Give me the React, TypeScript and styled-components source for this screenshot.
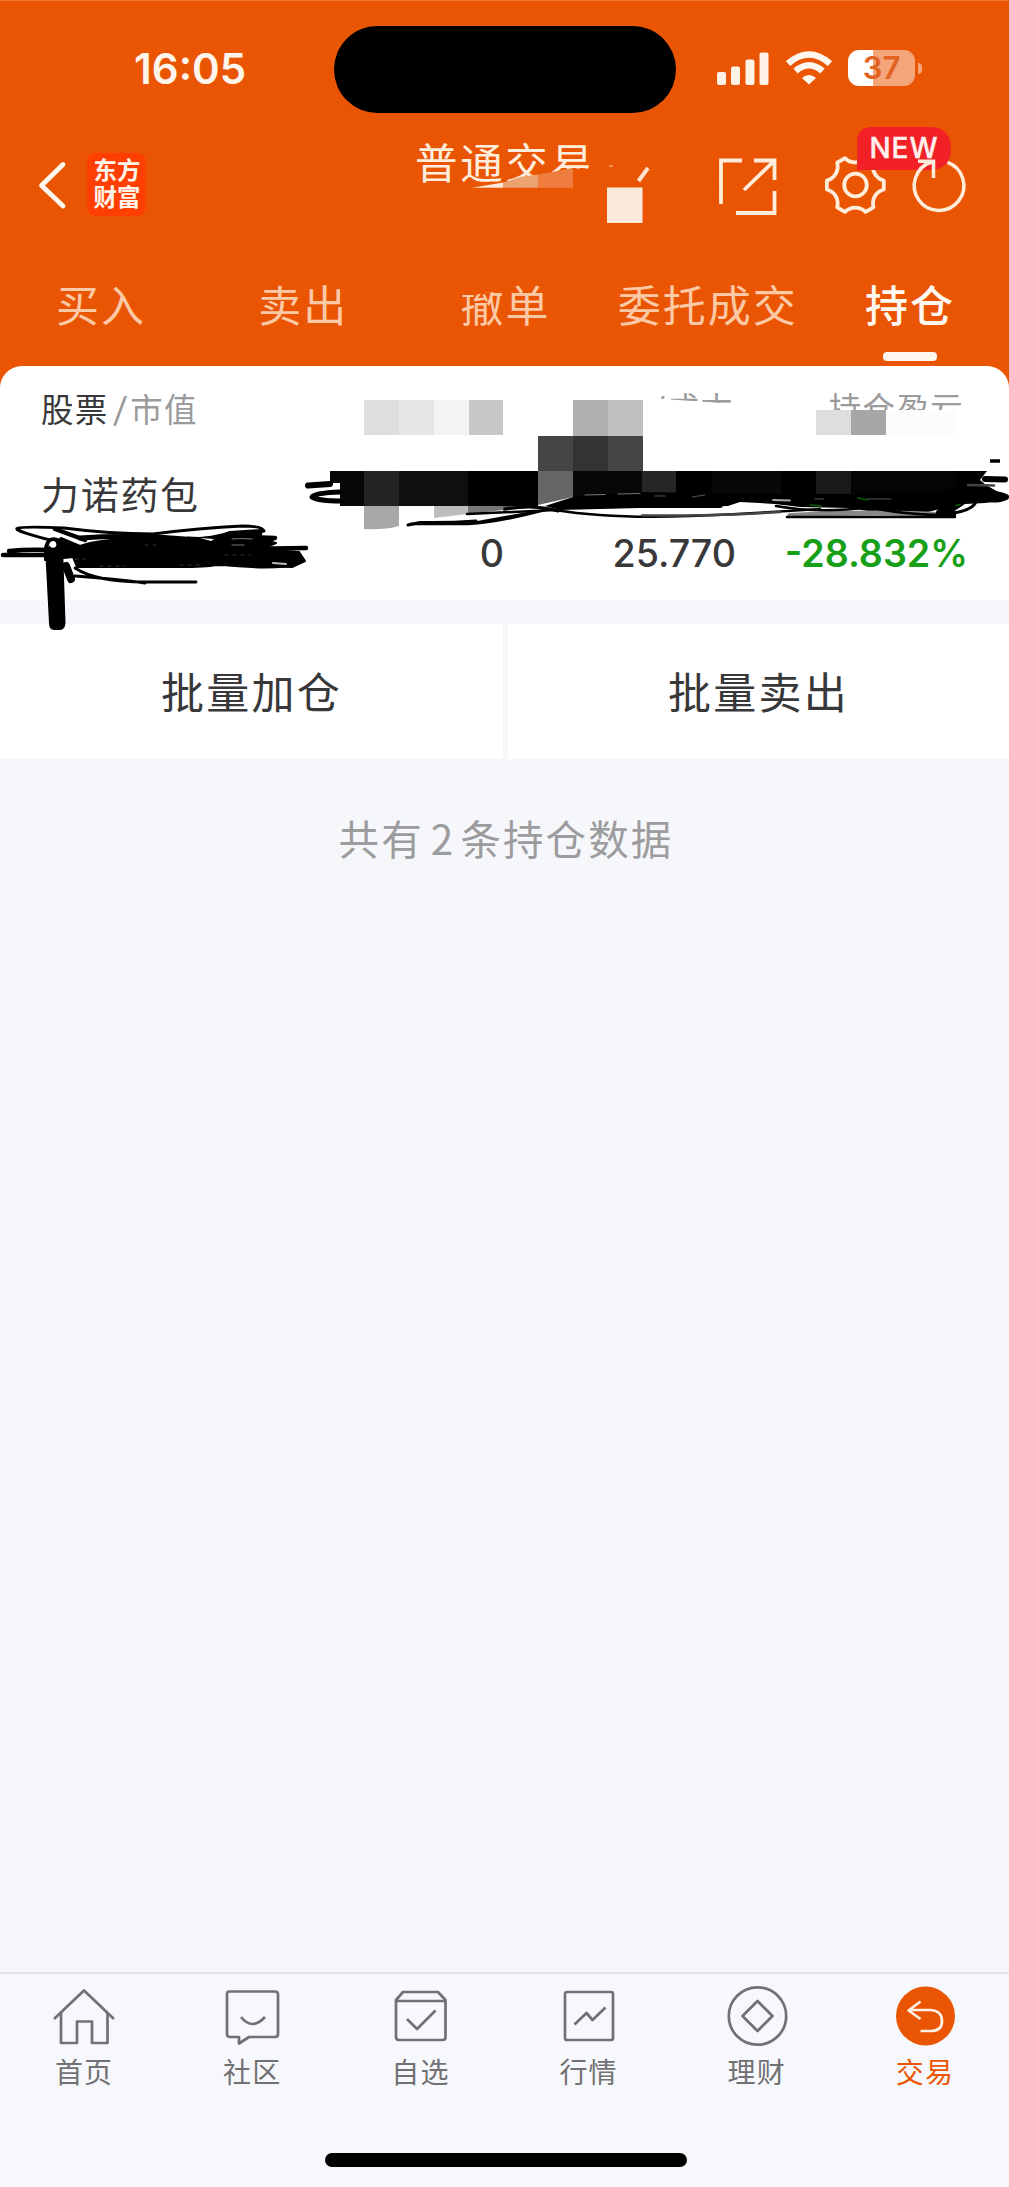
import React from "react";
import styled, { createGlobalStyle } from "styled-components";

const ORANGE = "#ea5503";
const GRAY = "#717174";

const Global = createGlobalStyle`
  * { box-sizing: border-box; }
  body {
    margin: 0;
    background: #f6f7fa;
    font-family: Inter, "Noto Sans CJK SC", sans-serif;
    color: #38383a;
  }
  svg { display: block; flex: none; }
`;

const Screen = styled.div`
  position: relative;
  width: 1009px;
  height: 2187px;
  display: flex;
  flex-direction: column;
  overflow: hidden;
  background: #f6f7fa;
`;

const Header = styled.header`
  height: 392px;
  margin-bottom: -26px;
  flex: none;
  background: ${ORANGE};
  border-top: 1px solid #f0752f;
`;

const StatusBar = styled.div`
  height: 130px;
  display: flex;
  align-items: flex-start;
  padding: 25px 86px 0 134px;
`;

const Clock = styled.div`
  width: 200px;
  padding-top: 17px;
  font-size: 42px;
  line-height: 52px;
  font-weight: 600;
  color: #fff5ec;
`;

const Island = styled.div`
  width: 342px;
  height: 87px;
  border-radius: 44px;
  background: #000;
`;

const StatusIcons = styled.div`
  display: flex;
  align-items: center;
  margin: 24px 0 0 41px;
`;

const WifiIcon = styled.svg`
  margin-left: 17px;
`;

const Battery = styled.div`
  width: 67px;
  height: 36px;
  margin-left: 16px;
  border-radius: 11px;
  display: flex;
  align-items: center;
  justify-content: center;
  background: linear-gradient(90deg, #fff 25px, #f5a57a 25px);
  color: #e2631f;
  font-size: 31px;
  line-height: 36px;
  font-weight: 600;
`;

const Nub = styled.div`
  width: 4px;
  height: 11px;
  margin-left: 3px;
  border-radius: 0 5px 5px 0;
  background: #f5a57a;
`;

const NavBar = styled.nav`
  height: 120px;
  display: flex;
  align-items: flex-start;
  padding-left: 36px;
`;

const BackIcon = styled.svg`
  margin-top: 28px;
`;

const Logo = styled.div`
  width: 61px;
  height: 63px;
  margin: 22px 0 0 19px;
  padding: 4px 0 0 1px;
  border-radius: 9px;
  background: #ff3f02;
  color: #fff4ea;
  font-size: 23.5px;
  line-height: 27px;
  font-weight: 700;
  text-align: center;
`;

const Title = styled.h1`
  width: 288px;
  margin: 3px 0 0 269px;
  font-size: 42.5px;
  line-height: 60px;
  font-weight: 400;
  letter-spacing: 2.6px;
  color: #ffeedd;
`;

const NavIcons = styled.svg`
  margin-left: 15px;
  margin-top: -11px;
`;

const Tabs = styled.div`
  display: grid;
  grid-template-columns: repeat(5, 1fr);
  padding-left: 0;
  margin-right: -2px;
`;

const Tab = styled.div<{ $active?: boolean }>`
  display: flex;
  flex-direction: column;
  align-items: center;
  padding-top: 23px;
  font-size: 43px;
  line-height: 64px;
  letter-spacing: 2px;
  white-space: nowrap;
  font-weight: ${(p) => (p.$active ? 500 : 400)};
  color: ${(p) => (p.$active ? "#fff8f0" : "#fcc9a6")};
  &::after {
    content: "";
    width: 54px;
    height: 9px;
    margin-top: 14px;
    border-radius: 4px;
    background: ${(p) => (p.$active ? "#fff6ee" : "transparent")};
  }
`;

const Card = styled.section`
  height: 234px;
  flex: none;
  border-radius: 22px 22px 0 0;
  background: #fff;
`;

const Row = styled.div<{ $top: number; $size: number }>`
  display: grid;
  grid-template-columns: 301px 162px 232px 230px;
  padding: ${(p) => p.$top}px 0 0 41px;
  font-size: ${(p) => p.$size}px;
  line-height: 56px;
  font-weight: 400;
`;

const HeadCell = styled.span<{ $right?: boolean; $clip?: string }>`
  font-size: 32.5px;
  letter-spacing: 1.3px;
  padding-right: ${(p) => (p.$right ? 2 : 0)}px;
  text-align: ${(p) => (p.$right ? "right" : "left")};
  color: ${(p) => (p.$right ? "#9b9b9d" : "#38383a")};
  clip-path: ${(p) => p.$clip || "none"};
  em { font-style: normal; color: #9b9b9d; }
  i { display: inline-block; font-style: normal; font-size: 34px; padding: 0 3px 0 5px; transform: skewX(-6deg); }
`;

const StockName = styled.div`
  padding: 28px 0 0 41px;
  font-size: 38px;
  line-height: 56px;
  letter-spacing: 1.7px;
`;

const Value = styled.span<{ $down?: boolean }>`
  text-align: right;
  font-weight: ${(p) => (p.$down ? 600 : 500)};
  margin-right: ${(p) => (p.$down ? -2 : 0)}px;
  color: ${(p) => (p.$down ? "#17a017" : "#38383a")};
`;

const Actions = styled.div`
  height: 135px;
  flex: none;
  margin-top: 24px;
  display: grid;
  grid-template-columns: 503px 501px;
  gap: 5px;
`;

const Action = styled.div`
  display: flex;
  align-items: center;
  justify-content: center;
  background: #fff;
  font-size: 43px;
  letter-spacing: 2.2px;
  padding-bottom: 4px;
`;

const Summary = styled.p`
  flex: 1;
  margin: 0;
  padding: 49px 0 0 3px;
  text-align: center;
  font-family: "Noto Sans CJK SC", sans-serif;
  font-size: 40.5px;
  line-height: 60px;
  letter-spacing: 2.1px;
  color: #9c9c9e;
  span { padding: 0 5px 0 7px; }
`;

const TabBar = styled.footer`
  height: 215px;
  flex: none;
  border-top: 2px solid #e4e5e7;
  background: #f7f8fb;
  display: grid;
  grid-template-columns: repeat(6, 1fr);
  grid-template-rows: 179px 13px;
  justify-items: center;
`;

const TabItem = styled.div<{ $active?: boolean }>`
  display: flex;
  flex-direction: column;
  align-items: center;
  padding-top: 12px;
  font-size: 28px;
  line-height: 40px;
  letter-spacing: 1.2px;
  color: ${(p) => (p.$active ? ORANGE : GRAY)};
  svg { margin: 0 0 7px; }
`;

const HomeIndicator = styled.div`
  grid-column: 1 / -1;
  width: 362px;
  height: 14px;
  margin-left: 2px;
  border-radius: 7px;
  background: #000;
`;

const Markup = styled.svg`
  position: absolute;
  left: 0;
  top: 0;
  pointer-events: none;
`;

const NewBadgeText = styled.text`
  font-family: Inter, sans-serif;
  font-size: 28px;
  font-weight: 500;
`;

const polar = (r: number, deg: number) => {
  const t = (deg * Math.PI) / 180;
  return `${(855.3 + r * Math.cos(t)).toFixed(2)} ${(185 + r * Math.sin(t)).toFixed(2)}`;
};

const gearPath =
  [0, 60, 120, 180, 240, 300]
    .map((a, i) => `${i ? "L" : "M"}${polar(28.8, a - 9)} L${polar(28.8, a + 9)} C${polar(21.6, a + 18)} ${polar(21.6, a + 42)} ${polar(28.8, a + 51)}`)
    .join(" ") + "Z";

const NavActions = () => (
  <NavIcons width="300" height="110" viewBox="709 120 300 110" fill="none" stroke="#ffecda" strokeWidth="3.8">
    <path d="M721 204V160.500H742M754 160.500H774.500V180M774.500 191V213H736M744 190L774 161" />
    <path d={gearPath} strokeLinejoin="round" />
    <circle cx="855.500" cy="185" r="11.300" />
    <path d="M857 170V142Q857 127 873 127H929Q951 127 951 148.500Q951 170 929 170Z" fill="#f22127" stroke="none" />
    <NewBadgeText x="869.500" y="157.500" fill="#fff0ee" stroke="#fff0ee" strokeWidth="0.400" textLength="68">NEW</NewBadgeText>
    <path d="M931.500 162A24.800 24.800 0 1 0 947.500 162.300M918 161.300H933.500V178" strokeWidth="3.500" />
  </NavIcons>
);

const icons: Record<string, React.ReactNode> = {
  首页: <path d="M0 33L30 4.500L60 33M7 27V57H23V35.500H38V57H53.500V27" />,
  社区: (
    <>
      <path d="M7 5.500H53Q56 5.500 56 8.500V48Q56 51 53 51H27L17 57.500V51H8Q5 51 5 48V8.500Q5 5.500 7 5.500Z" />
      <path d="M19 31Q30 45 43 31" />
    </>
  ),
  自选: (
    <>
      <path d="M6 14L13 6H48L55.500 14V51Q55.500 54 52.500 54H9Q6 54 6 51ZM6 15H55.500" />
      <path d="M17 33L27 43L45.500 24.500" />
    </>
  ),
  行情: (
    <>
      <rect x="6" y="6" width="48" height="48" rx="2" />
      <path d="M15.500 38.500L27.500 27L33.500 34L46.500 21.500" />
    </>
  ),
  理财: (
    <>
      <circle cx="30.500" cy="30" r="28.700" />
      <path d="M30.500 15L45.500 30L30.500 45L15.500 30Z" />
    </>
  ),
  交易: (
    <>
      <circle cx="30.500" cy="30" r="29.500" fill={ORANGE} stroke="none" />
      <path d="M25.500 15.500L13.500 24.500L25.500 33M13.500 24H36Q47 25 47 35Q47 45 36 45H25.500" stroke="#fff0e2" />
    </>
  ),
};

/* x, y, width, height, colour of each mosaic tile */
const tiles: [number, number, number, number, string][] = [
  [364, 400, 35, 35, "#dedede"], [399, 400, 35, 35, "#e6e6e6"], [434, 400, 34.5, 35, "#f3f3f3"], [468.500, 400, 34.500, 35, "#c7c7c7"],
  [572.500, 400, 35, 35.500, "#b0b0b0"], [607.500, 400, 35, 35.500, "#bfbfbf"],
  [538, 435.500, 35, 35.500, "#454545"], [572.500, 435.500, 35, 35.500, "#333333"], [607.500, 435.500, 35, 35.500, "#454545"],
  [816, 410, 35, 25, "#dedede"], [851, 410, 34.500, 25, "#a6a6a6"], [885.500, 410, 69.500, 25, "#fcfcfc"],
  [330, 471, 10, 12, "#080808"], [340, 471, 24, 35, "#080808"], [364, 471, 35, 35, "#232323"], [399, 471, 69, 35, "#101010"],
  [468, 471, 70, 35, "#000000"], [572.500, 471, 70, 35, "#070707"], [642, 471, 34, 26, "#262626"], [676, 471, 36, 26, "#000000"],
  [712, 471, 69, 24, "#080808"], [781, 471, 35, 24, "#000000"], [816, 471, 35, 24, "#191919"], [851, 471, 104, 24, "#040404"],
];

const Doodles = () => (
  <Markup width="1009" height="2187" viewBox="0 0 1009 2187" fill="none" stroke="#000" strokeLinecap="round" strokeLinejoin="round">
    <g stroke="none">
      <path d="M473 190L484 187.500L573 168.500H604V192H473Z" fill={ORANGE} />
      <path d="M472 187.700L503 182.500V187.700Z" fill="#fbe8d6" />
      <path d="M503 182.500L520 177L538 174.500V187.700H503Z" fill="#eca271" />
      <path d="M538 174.500L573 168V187.700H538Z" fill="#f07d40" />
      <rect x="607" y="187.500" width="35.500" height="35.500" fill="#fbe9db" />
      <rect x="609" y="165.500" width="4" height="1.200" fill="#f9b58c" />
      <path d="M458 280H488L505 286V291L484 293L475 295H458Z" fill={ORANGE} />
    </g>
    <path d="M638.500 181L648 168" stroke="#ffe4cd" strokeWidth="4" strokeLinecap="butt" />

    <g stroke="none">
      <path d="M364 506H399V526Q384 530 364 529Z" fill="#a8a8a8" />
      <path d="M434 506H468V514L434 518Z" fill="#bdbdbd" />
      <path d="M468 506H503V510L468 514Z" fill="#777" />
      <path d="M503 506H538L503 511Z" fill="#555" />
      {tiles.map(([x, y, w, h, c], i) => (
        <rect key={i} x={x} y={y} width={w} height={h} fill={c} shapeRendering="crispEdges" />
      ))}
      <path d="M538 471H573V497L538 505Z" fill="#666" />
      <path d="M573 497L590 494H640L642 492L712 493L780 494L850 494L955 490V471H987L980 480L986 485L1000 493L1004 500L985 503L965 504L953 512L940 509L920 514L880 513L850 508L800 507L775 504L740 502L728 506L640 508L560 510L545 506Z" fill="#000" />
    </g>
    <path d="M308 485.500L330 484" strokeWidth="6" />
    <path d="M340 492Q314 493 312 497Q319 501 340 501" strokeWidth="5" />
    <path d="M410 524H468L545 510Q500 522 468 524" fill="none" strokeWidth="2.500" />
    <path d="M408 525L420 522.500Q450 523 476 521" strokeWidth="3" />
    <path d="M467 514L555 510Q610 519 690 516Q760 513 820 509" strokeWidth="2.500" />
    <path d="M505 509Q535 504 558 511" strokeWidth="3" />
    <path d="M642 515.500Q720 516 780 512" stroke="#444" strokeWidth="2.500" />
    <path d="M590 501H725M580 505H720" strokeWidth="6" />
    <path d="M790 515.500Q870 511 951 515" stroke="#888" strokeWidth="5" />
    <path d="M776 506Q820 514 870 507Q900 515 955 515M787 517H955" strokeWidth="2.500" />
    <path d="M940 513H951" strokeWidth="8" />
    <path d="M945 514Q973 512 977 500" strokeWidth="3" />
    <path d="M985 479L1005 479.500" strokeWidth="6" />
    <path d="M960 497Q990 490 1006 497Q993 503 970 495" strokeWidth="6" />
    <path d="M968 485L994 485.500" stroke="#444" strokeWidth="2.500" />
    <path d="M990 461H1000" strokeWidth="3.500" strokeLinecap="butt" />
    <path d="M773 500L790 500.500" stroke="#aaa" strokeWidth="1.800" />
    <path d="M585 495L605 494.500M618 494L640 493.500" stroke="#777" strokeWidth="1.200" />
    <path d="M655 496H665M692 497L705 495M867 499H891M815 499H824" stroke="#555" strokeWidth="1" />
    <path d="M810 505L821 506M858 498L868 500M956 505.500L960 504.500" stroke="#075f08" strokeWidth="1.500" />

    <path d="M61 538L80 546Q105 537 153 540Q205 541 230 532L262 530L260 539L276 543L262 549L299 552L305 561L292 567L216 565Q206 567 180 567H77L73 557L45 560V550Z" fill="#000" strokeWidth="2" />
    <path d="M50 540Q15 531 17 528.500Q22 526 64 528Q110 534 153 534Q200 528 242 526Q263 526 264 531L235 533Q212 540 188 538" strokeWidth="3" />
    <path d="M55 529L85 540M225 536L275 538L244 549L306 548" strokeWidth="4.500" />
    <path d="M80 538Q140 534 205 541Q225 541 245 534" strokeWidth="5" />
    <path d="M218 563Q275 570 297 563" strokeWidth="4" />
    <path d="M3 555H45M9 551Q28 549 48 550" strokeWidth="4.500" />
    <path d="M45 547H63L65.500 623Q65 630 60 630H54Q49 630 49 623Z" fill="#000" stroke="none" />
    <path d="M46 548Q48 537 57 540M60 541V552" strokeWidth="4" />
    <circle cx="53" cy="544.500" r="3.300" fill="#fff" stroke="none" />
    <path d="M66 566L71 579" strokeWidth="8" />
    <path d="M75 568Q96 582 145 582H196M75 576Q115 579 145 583" strokeWidth="2.800" />
    <path d="M232 539Q242 538 252 539M232 545H244" stroke="#777" strokeWidth="1.200" />
    <path d="M273 563L286 564" stroke="#bbb" strokeWidth="2" />
    <path d="M200 538L214 539L211 541Z" fill="#fff" stroke="none" />
    <path d="M75 559H85M100 566H125M145 545H158M180 565H200M225 555H250" stroke="#444" strokeWidth="0.800" strokeDasharray="3 5" />
  </Markup>
);

export default function App() {
  return (
    <Screen>
      <Global />
      <Header>
        <StatusBar>
          <Clock>16:05</Clock>
          <Island />
          <StatusIcons>
            <svg width="52" height="34" viewBox="0 0 52 34" fill="#fff2e7">
              <rect x="0" y="21" width="9" height="13" rx="2" />
              <rect x="14" y="15.500" width="9" height="18.500" rx="2" />
              <rect x="28.500" y="8.500" width="9" height="25.500" rx="2" />
              <rect x="42.500" y="1.500" width="9" height="32.500" rx="2" />
            </svg>
            <WifiIcon width="46" height="34" viewBox="0 0 46 34" fill="none" stroke="#fff6ee">
              <path d="M2 12.500Q23 -5.500 44 12.500" strokeWidth="6.500" />
              <path d="M9.500 20Q23 8.500 36.500 20" strokeWidth="6.500" />
              <path d="M16 27Q23 21 30 27L23 33.500Z" fill="#fff6ee" stroke="none" />
            </WifiIcon>
            <Battery>37</Battery>
            <Nub />
          </StatusIcons>
        </StatusBar>
        <NavBar>
          <BackIcon width="32" height="52" viewBox="36 159 32 52" fill="none" stroke="#fff6ee" strokeWidth="4.800" strokeLinecap="round" strokeLinejoin="round">
            <path d="M63 164.500L41.500 185.500L63 206" />
          </BackIcon>
          <Logo>东方<br />财富</Logo>
          <Title>普通交易</Title>
          <NavActions />
        </NavBar>
        <Tabs>
          <Tab>买入</Tab>
          <Tab>卖出</Tab>
          <Tab>撤单</Tab>
          <Tab>委托成交</Tab>
          <Tab $active>持仓</Tab>
        </Tabs>
      </Header>
      <Card>
        <Row $top={16} $size={33}>
          <HeadCell>股票<em><i>/</i>市值</em></HeadCell>
          <span />
          <HeadCell $right $clip="polygon(130px 0, 100% 0, 100% 22px, 130px 15px)">/成本</HeadCell>
          <HeadCell $right $clip="inset(0 0 28px 0)">持仓盈亏</HeadCell>
        </Row>
        <StockName>力诺药包</StockName>
        <Row $top={3} $size={37.6}>
          <span />
          <Value>0</Value>
          <Value>25.770</Value>
          <Value $down>-28.832%</Value>
        </Row>
      </Card>
      <Actions>
        <Action>批量加仓</Action>
        <Action>批量卖出</Action>
      </Actions>
      <Summary>共有<span>2</span>条持仓数据</Summary>
      <TabBar>
        {Object.keys(icons).map((label) => (
          <TabItem key={label} $active={label === "交易"}>
            <svg width="60" height="60" viewBox="0 0 60 60" fill="none" stroke={GRAY} strokeWidth="2.700" strokeLinejoin="round" overflow="visible">
              {icons[label]}
            </svg>
            {label}
          </TabItem>
        ))}
        <HomeIndicator />
      </TabBar>
      <Doodles />
    </Screen>
  );
}
